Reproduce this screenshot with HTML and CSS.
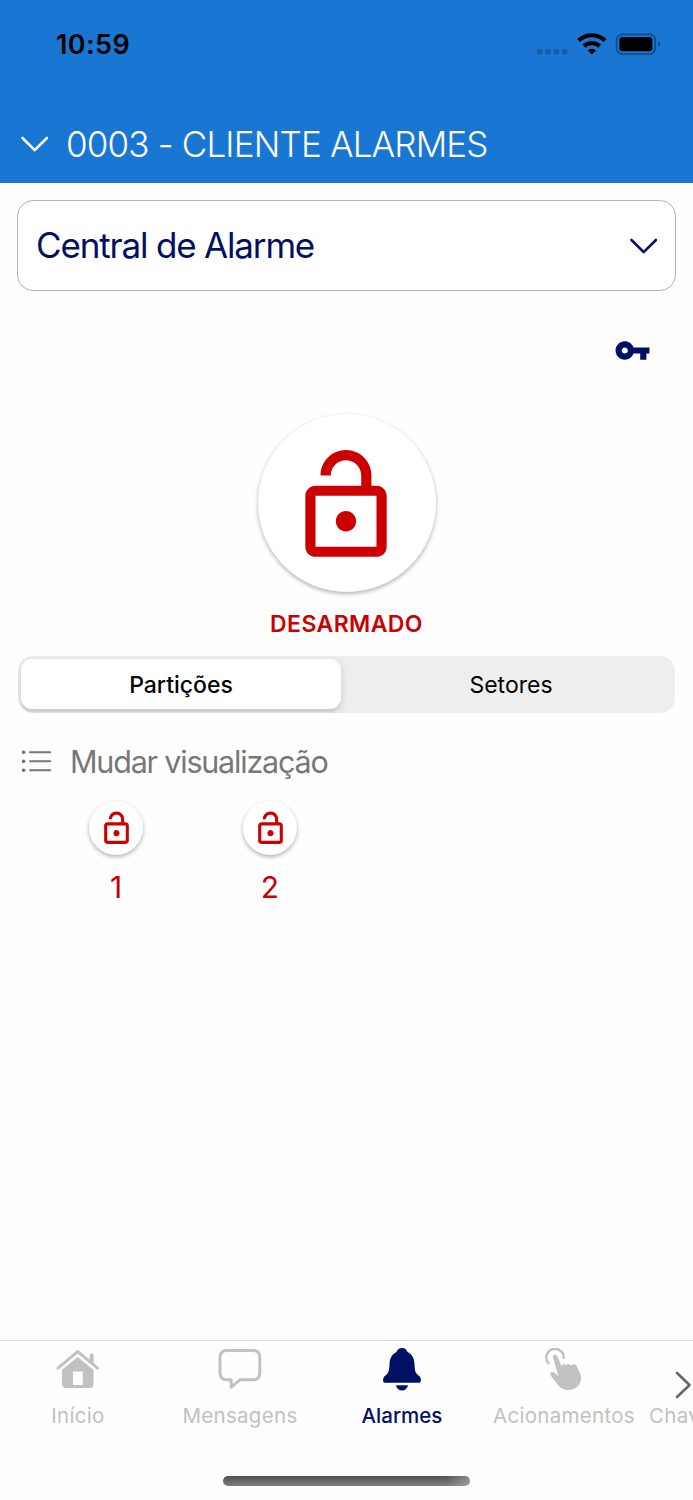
FILE: index.html
```html
<!DOCTYPE html>
<html lang="pt-BR">
<head>
<meta charset="utf-8">
<title>Alarmes</title>
<link rel="stylesheet" href="styles.css">
</head>
<body>
<svg class="defs" width="0" height="0" aria-hidden="true">
  <symbol id="lock" viewBox="0 0 24 24">
    <path d="M12 17c1.1 0 2-.9 2-2s-.9-2-2-2-2 .9-2 2 .9 2 2 2zm6-9h-1V6c0-2.76-2.24-5-5-5S7 3.24 7 6h2c0-1.66 1.34-3 3-3s3 1.34 3 3v2H6c-1.1 0-2 .9-2 2v10c0 1.1.9 2 2 2h12c1.1 0 2-.9 2-2V10c0-1.1-.9-2-2-2zm0 12H6V10h12v10z"/>
  </symbol>
  <symbol id="chevron" viewBox="0 0 28 18">
    <path d="M2.500 3 14.700 15.200 26.900 3" fill="none" stroke="currentColor" stroke-width="2.600" stroke-linecap="round" stroke-linejoin="round"/>
  </symbol>
</svg>
<div class="screen">
  <header class="header">
    <div class="status">
      <span class="time">10:59</span>
      <svg class="status-icons" width="126" height="24" viewBox="0 0 126 24">
        <g fill="#145ea9"><rect x="1" y="16" width="5.4" height="5.4" rx="1.5"/><rect x="9.4" y="16" width="5.4" height="5.4" rx="1.5"/><rect x="17.7" y="16" width="5.4" height="5.4" rx="1.5"/><rect x="26" y="16" width="5.4" height="5.4" rx="1.5"/></g>
        <g fill="none" stroke="#000" stroke-width="4.200"><path d="M42.600 7.500a19.200 19.200 0 0 1 26.400 0"/><path d="M48 13.200a11.500 11.500 0 0 1 15.600 0"/></g>
        <path d="M55.8 21.600 51.600 17.400q4.200-3.500 8.400 0z"/>
        <rect x="80.6" y="1.3" width="38.6" height="19.8" rx="5.6" fill="none" stroke="#104c88" stroke-width="1.7"/>
        <rect x="83.4" y="4.100" width="33" height="14.200" rx="3"/>
        <path d="M122 8.400q2.400.8 2.400 2.800t-2.400 2.800z" fill="#104c88"/>
      </svg>
    </div>
    <div class="client">
      <svg class="chevron" width="28" height="18"><use href="#chevron"/></svg>
      <h1 class="client-name">0003 - CLIENTE ALARMES</h1>
    </div>
  </header>

  <main class="content">
    <div class="select">
      <span class="select-label">Central de Alarme</span>
      <svg class="chevron chevron-select" width="28" height="18"><use href="#chevron"/></svg>
    </div>
    <svg class="key" width="37" height="37" viewBox="0 0 24 24"><path fill="#001064" d="M12.65 10C11.83 7.67 9.61 6 7 6c-3.31 0-6 2.69-6 6s2.69 6 6 6c2.61 0 4.83-1.67 5.65-4H17v4h4v-4h2v-4H12.65zM7 14c-1.1 0-2-.9-2-2s.9-2 2-2 2 .9 2 2-.9 2-2 2z"/></svg>
    <div class="alarm"><svg width="122" height="122"><use href="#lock"/></svg></div>
    <div class="alarm-state">DESARMADO</div>
    <div class="segments">
      <div class="segment segment-active">Partições</div>
      <div class="segment segment-idle">Setores</div>
    </div>
    <div class="view-toggle">
      <svg width="30" height="24" viewBox="0 0 30 24"><g fill="#707070"><circle cx="1.6" cy="3.300" r="1.8"/><circle cx="1.6" cy="12.300" r="1.8"/><circle cx="1.6" cy="21.300" r="1.8"/></g><path d="M8 3.300h20.200M8 12.300h20.200M8 21.300h20.200" stroke="#777" stroke-width="2" stroke-linecap="round"/></svg>
      <span class="view-label">Mudar visualização</span>
    </div>
    <div class="partitions">
      <div class="partition"><div class="partition-icon"><svg width="37" height="37"><use href="#lock"/></svg></div><span>1</span></div>
      <div class="partition"><div class="partition-icon"><svg width="37" height="37"><use href="#lock"/></svg></div><span>2</span></div>
    </div>
  </main>

  <nav class="tabs">
    <div class="tab">
      <svg width="44" height="44" viewBox="0 0 44 44"><path d="M2 20.2 21.7 3.6 41.5 20.2" fill="none" stroke="#c1c1c1" stroke-width="3" stroke-linecap="round" stroke-linejoin="round"/><path d="M33.6 7.5q0-2 2-2t2 2v8.8l-4-3.4z" fill="#c1c1c1"/><path fill="#c1c1c1" fill-rule="evenodd" d="M21.7 9 37.5 21.8V36q0 4-4 4H10q-4 0-4-4V21.8zM17 23.5V37h9.8V23.5z"/></svg>
      <span class="tab-label">Início</span>
    </div>
    <div class="tab">
      <svg width="44" height="44" viewBox="0 0 44 44"><path d="M9 2.500H35Q41.800 2.500 41.800 9.500V24.800Q41.800 31.800 35 31.800H22L13.200 39.200V31.800H9Q2 31.800 2 24.800V9.500Q2 2.500 9 2.500Z" fill="none" stroke="#c1c1c1" stroke-width="3" stroke-linejoin="round"/></svg>
      <span class="tab-label">Mensagens</span>
    </div>
    <div class="tab tab-active">
      <svg width="44" height="44" viewBox="0 0 44 44" fill="#001064"><path d="M22 0c-2.800 0-4.600 1.600-5.600 4.100C12 6.500 9.700 10.400 9.500 16c-.2 5.300-.5 8-2.600 10.200L4.300 28.400C2.700 30 2.500 34.700 4.700 34.700h34.600c2.200 0 2-4.700.4-6.300l-2.600-2.200C35 24 34.700 21.300 34.500 16c-.2-5.600-2.500-9.500-6.900-11.900C26.600 1.600 24.800 0 22 0z"/><path d="M16 37.200h12c-.6 3.200-2.900 5.300-6 5.300s-5.400-2.100-6-5.300z"/></svg>
      <span class="tab-label">Alarmes</span>
    </div>
    <div class="tab">
      <svg width="44" height="44" viewBox="0 0 44 44"><path d="M6.300 15.100A8.700 8.700 0 1 1 21.700 9.800" fill="none" stroke="#c1c1c1" stroke-width="2.400" stroke-linecap="round"/><path fill="#c1c1c1" d="M11 9.800C10 6.700 14.200 5.500 15.300 8.400L19.900 18.500C20 15.400 23 15.200 23.900 17.600 24.900 15.200 28.300 15.400 29.100 17.900 30.700 15.300 33.900 15.800 34.900 18.600L38 25C41.500 33.500 36 42 26.500 42 20.500 42 17.200 38.800 14.700 35.200L8.800 27.700C6.900 25.200 9.600 22.800 12.200 24.600L16.500 28.100Z"/></svg>
      <span class="tab-label">Acionamentos</span>
    </div>
    <div class="tab tab-last">
      <svg class="next" width="18" height="28" viewBox="0 0 18 28"><path d="M3 2 15.500 14 3 26" fill="none" stroke="#666" stroke-width="2.600" stroke-linecap="round" stroke-linejoin="round"/></svg>
      <span class="tab-label">Chaves</span>
    </div>
  </nav>
  <footer class="home"><div class="home-bar"></div></footer>
</div>
</body>
</html>
```
FILE: styles.css
```css
* { box-sizing: border-box; }
body { margin: 0; background: #fff; font-family: Inter, "Liberation Sans", sans-serif; }
svg { display: block; flex: none; }
.defs { position: absolute; }
.screen { display: flex; flex-direction: column; width: 693px; height: 1500px; overflow: hidden; background: #fefefe; }
.header { height: 183px; background: #1976d2; flex: none; }
.status { display: flex; justify-content: space-between; align-items: center; height: 88px; padding: 1px 31px 0 56px; }
.time { font-size: 27px; font-weight: 600; color: #000; letter-spacing: .4px; }
.status-icons { margin-left: auto; }
.client { display: flex; align-items: center; gap: 18px; height: 111px; padding-left: 20px; color: #fff; }
.client-name { margin: 0; font-size: 35px; font-weight: 300; letter-spacing: -0.83px; white-space: nowrap; }
.content { display: flex; flex-direction: column; flex: 1; padding: 17px 17px 0; }
.select { display: flex; justify-content: space-between; align-items: center; height: 91px; padding: 0 18px 2px; border: 1px solid #b5b5b5; border-radius: 16px; color: #001064; background: #fff; }
.select-label { font-size: 35px; letter-spacing: -1.17px; white-space: nowrap; }
.chevron-select { margin-top: 2px; }
.key { align-self: flex-end; margin: 41px 25px 0 0; }
.alarm { display: flex; align-items: center; justify-content: center; align-self: center; width: 178px; height: 178px; margin: 45px 0 0; padding: 5px 1px 0 0; border-radius: 50%; background: #fff; fill: #c00; box-shadow: 0 2px 4px rgba(0,0,0,.3); }
.alarm-state { align-self: center; margin-top: 18px; font-size: 23px; line-height: 28px; font-weight: 600; letter-spacing: .4px; color: #c00; }
.segments { display: flex; height: 57px; margin: 18px 1px 0; padding: 3px; border-radius: 15px; background: #eee; overflow: hidden; }
.segment { display: flex; align-items: center; justify-content: center; flex: 1; font-size: 23px; color: #000; }
.segment-idle { padding: 1px 0 0 9px; }
.segment-active { height: 50px; padding-top: 2px; border-radius: 11px; background: #fff; font-weight: 500; flex: 0 0 320px; box-shadow: 0 3px 8px rgba(0,0,0,.14), 0 3px 1px rgba(0,0,0,.05); }
.view-toggle { display: flex; align-items: center; gap: 18px; height: 40px; margin: 28px 0 0 5px; color: #777; }
.view-label { font-size: 30.5px; letter-spacing: -1.2px; white-space: nowrap; }
.partitions { display: flex; margin: 20px 0 0 22px; }
.partition { display: flex; flex-direction: column; align-items: center; width: 154px; gap: 14px; font-size: 30px; line-height: 36px; color: #c00; }
.partition-icon { display: flex; align-items: center; justify-content: center; width: 54px; height: 54px; padding-top: 1px; border-radius: 50%; background: #fff; fill: #c00; box-shadow: 0 2px 4px rgba(0,0,0,.3); }
.tabs { display: flex; flex: none; height: 122px; padding-top: 7px; border-top: 1px solid #ddd; }
.tab { display: flex; flex-direction: column; align-items: center; flex: none; width: 162px; gap: 11px; font-size: 20.500px; line-height: 26px; color: #c1c1c1; letter-spacing: .3px; }
.tab:first-child { margin-left: -3px; }
.tab-active { color: #001064; font-weight: 500; letter-spacing: 0; }
.tab-last { width: 76px; margin-left: 4px; align-items: flex-start; gap: 4px; padding-top: 23px; }
.next { margin-left: 25px; }
.home { height: 38px; flex: none; display: flex; justify-content: center; padding-top: 14px; }
.home-bar { width: 247px; height: 10px; border-radius: 5px; background: linear-gradient(90deg, transparent 90%, rgba(200,200,200,.45)), linear-gradient(180deg, #505050, #808080); }
```
